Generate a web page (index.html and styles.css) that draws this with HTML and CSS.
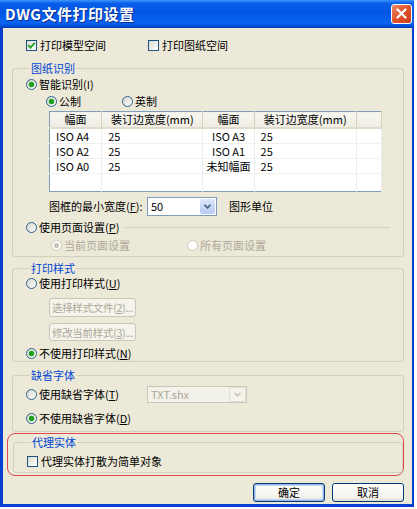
FILE: index.html
```html
<!DOCTYPE html>
<html lang="zh-CN">
<head>
    <meta charset="UTF-8">
    <title>DWG文件打印设置</title>
    <link rel="stylesheet" href="styles.css">
</head>
<body>
    <div class="window">
        <div class="titlebar">
            <span class="title">DWG文件打印设置</span>
            <span class="close-btn">
                <svg width="11" height="11" viewBox="0 0 11 11">
                    <path d="M1.5 1.5 L9.5 9.5 M9.5 1.5 L1.5 9.5" stroke="#fff" stroke-width="2.2" stroke-linecap="round"/>
                </svg>
            </span>
        </div>

        <div class="content">
            <div class="top-row">
                <label class="check first">
                    <span class="box">
                        <svg width="9" height="9" viewBox="0 0 9 9"><path d="M1.2 4.2 L3.4 6.6 L7.8 1.8" fill="none" stroke="#21a121" stroke-width="1.8"/></svg>
                    </span>打印模型空间
                </label>
                <label class="check"><span class="box"></span>打印图纸空间</label>
            </div>

            <!-- 图纸识别 -->
            <fieldset class="group g-detect">
                <legend>图纸识别</legend>
                <div class="row r-smart"><span class="radio on"></span>智能识别(I)</div>
                <div class="row r-unit">
                    <span class="opt metric"><span class="radio on"></span>公制</span>
                    <span class="opt"><span class="radio"></span>英制</span>
                </div>
                <table class="sizes">
                    <colgroup>
                        <col style="width:52px"><col style="width:101px"><col style="width:51px"><col style="width:102px"><col style="width:25px">
                    </colgroup>
                    <tr>
                        <th>幅面</th><th>装订边宽度(mm)</th><th>幅面</th><th>装订边宽度(mm)</th><th></th>
                    </tr>
                    <tr><td>ISO A4</td><td>25</td><td class="c">ISO A3</td><td>25</td><td></td></tr>
                    <tr><td>ISO A2</td><td>25</td><td class="c">ISO A1</td><td>25</td><td></td></tr>
                    <tr><td>ISO A0</td><td>25</td><td class="c">未知幅面</td><td>25</td><td></td></tr>
                    <tr class="blank"><td></td><td></td><td></td><td></td><td></td></tr>
                </table>
                <div class="row r-frame">
                    <span class="frame-label">图框的最小宽度(<u>F</u>):</span>
                    <span class="combo">
                        <span class="val">50</span>
                        <span class="arrow"><svg width="7" height="5" viewBox="0 0 7 5"><path d="M0.5 0.8 L3.5 3.8 L6.5 0.8" fill="none" stroke="#4d6185" stroke-width="1.6"/></svg></span>
                    </span>
                    <span class="unit">图形单位</span>
                </div>
                <div class="row r-page"><span class="radio"></span>使用页面设置(<u>P</u>)<span class="rule"></span></div>
                <div class="row r-sub disabled">
                    <span class="opt current"><span class="radio on"></span>当前页面设置</span>
                    <span class="opt"><span class="radio"></span>所有页面设置</span>
                </div>
            </fieldset>

            <!-- 打印样式 -->
            <fieldset class="group g-style">
                <legend>打印样式</legend>
                <div class="row r-use"><span class="radio"></span>使用打印样式(<u>U</u>)</div>
                <div class="btn small disabled">选择样式文件(<u>2</u>)...</div>
                <div class="btn small disabled second">修改当前样式(<u>3</u>)...</div>
                <div class="row r-nouse"><span class="radio on"></span>不使用打印样式(<u>N</u>)</div>
            </fieldset>

            <!-- 缺省字体 -->
            <fieldset class="group g-font">
                <legend>缺省字体</legend>
                <div class="row r-usefont">
                    <span class="font-opt"><span class="radio"></span>使用缺省字体(<u>T</u>)</span>
                    <span class="combo wide disabled">
                        <span class="val">TXT.shx</span>
                        <span class="arrow"><svg width="7" height="5" viewBox="0 0 7 5"><path d="M0.5 0.8 L3.5 3.8 L6.5 0.8" fill="none" stroke="#c9c7ba" stroke-width="1.6"/></svg></span>
                    </span>
                </div>
                <div class="row r-nofont"><span class="radio on"></span>不使用缺省字体(<u>D</u>)</div>
            </fieldset>

            <!-- 代理实体 (red marker) -->
            <div class="marker">
                <fieldset class="group g-proxy">
                    <legend>代理实体</legend>
                    <label class="check row r-proxy"><span class="box"></span>代理实体打散为简单对象</label>
                </fieldset>
            </div>

            <div class="actions">
                <div class="btn default">确定</div>
                <div class="btn">取消</div>
            </div>
        </div>
    </div>
</body>
</html>
```

FILE: styles.css
```css
body {
    margin: 0;
    background-color: #ffffff;
    font-family: "Noto Sans CJK SC", "Liberation Sans", sans-serif;
    font-size: 11px;
    line-height: 13px;
    color: #000000;
}

.window {
    width: 414px;
    box-sizing: border-box;
    border-left: 3px solid #0a3fd4;
    border-right: 2px solid #0a3fd4;
    border-bottom: 3px solid #0a3fd4;
    background-color: #ece9d8;
}

.titlebar {
    height: 27px;
    margin: 0 -2px 0 -3px;
    display: flex;
    align-items: center;
    justify-content: space-between;
    padding: 0 2px 0 5px;
    background: linear-gradient(to bottom, #3d95ff 0%, #0a5fe8 12%, #0055e5 45%, #0a64f0 85%, #0049d4 100%);
    border-bottom: 1px solid #0a3fb8;
}

.title {
    color: #ffffff;
    font-size: 15px;
    line-height: 18px;
    font-weight: bold;
    letter-spacing: 0.5px;
    text-shadow: 1px 1px 0 #0b2a8a;
}

.close-btn {
    width: 21px;
    height: 20px;
    box-sizing: border-box;
    border: 1px solid #ffffff;
    border-radius: 3px;
    background: linear-gradient(135deg, #f08a66 0%, #e0522a 50%, #c8401c 100%);
    display: flex;
    align-items: center;
    justify-content: center;
}

.content {
    padding: 10px 8px 2px 0;
}

/* checkboxes and radios */
.check {
    display: inline-flex;
    align-items: center;
}

.box {
    width: 11px;
    height: 11px;
    box-sizing: border-box;
    border: 1px solid #1c5180;
    background: linear-gradient(135deg, #dcdcd3, #ffffff);
    margin-right: 3px;
    display: inline-flex;
    align-items: center;
    justify-content: center;
}

.radio {
    width: 11px;
    height: 11px;
    box-sizing: border-box;
    border: 1px solid #2c628b;
    border-radius: 50%;
    background: linear-gradient(135deg, #d8d7cc, #ffffff);
    margin-right: 2px;
    flex: none;
}

.radio.on {
    background: radial-gradient(circle, #21a121 0 2.3px, #7fcf7f 2.8px, transparent 3.2px), linear-gradient(135deg, #d8d7cc, #ffffff);
}

.disabled .radio {
    border-color: #c9c7ba;
    background: #ffffff;
}

.disabled .radio.on {
    background: radial-gradient(circle, #cac8bb 0 2.3px, transparent 3px), #ffffff;
}

.top-row {
    height: 14px;
    display: flex;
    align-items: center;
    padding-left: 23px;
    margin-bottom: 10px;
}

.top-row .first {
    width: 122px;
}

/* group boxes */
.group {
    margin: 0 0 0 9px;
    padding: 0 0 0 13px;
    border: 1px solid #d0d0bf;
    border-radius: 3px;
}

.group legend {
    padding: 0 1px;
    margin-left: 4px;
    color: #0046d5;
    line-height: 12px;
}

.row {
    display: flex;
    align-items: center;
}

.r-smart {
    height: 20px;
}

.r-unit {
    height: 14px;
    padding-left: 20px;
}

.opt {
    display: inline-flex;
    align-items: center;
}

.metric {
    width: 76px;
}

/* size table */
.sizes {
    margin: 3px 0 0 23px;
    width: 333px;
    table-layout: fixed;
    border-collapse: collapse;
    border: 1px solid #7f9db9;
    background-color: #ffffff;
}

.sizes th {
    height: 15px;
    padding: 0;
    font-weight: normal;
    background: linear-gradient(to bottom, #f7f6f0, #efede3);
    border-bottom: 2px solid #e0dccb;
    border-right: 1px solid #d3cfbd;
}

.sizes td {
    height: 14px;
    padding: 0 0 0 6px;
    border-bottom: 1px solid #f0f0f0;
    border-right: 1px solid #ececec;
    white-space: nowrap;
    overflow: hidden;
}

.sizes td.c {
    text-align: center;
    padding: 0;
}

.sizes .blank td {
    height: 17px;
    border-bottom: none;
}

.r-frame {
    height: 19px;
    margin-top: 5px;
    padding-left: 23px;
}

.frame-label {
    width: 98px;
}

.combo {
    width: 70px;
    height: 19px;
    box-sizing: border-box;
    border: 1px solid #7f9db9;
    background-color: #ffffff;
    display: flex;
}

.combo .val {
    flex: 1;
    padding-left: 3px;
    line-height: 17px;
}

.combo .arrow {
    width: 15px;
    margin: 1px;
    border-radius: 2px;
    background: linear-gradient(to bottom, #dce6fb, #b8cbf5);
    display: flex;
    align-items: center;
    justify-content: center;
}

.unit {
    margin-left: 12px;
}

.r-page {
    height: 18px;
    margin-top: 2px;
}

.rule {
    flex: 1;
    height: 0;
    border-top: 1px solid #d0d0bf;
    margin: 0 13px 0 6px;
}

.r-sub {
    height: 18px;
    padding-left: 25px;
    color: #aca899;
    margin-bottom: 2px;
}

.current {
    width: 136px;
}

/* buttons */
.btn {
    height: 19px;
    box-sizing: border-box;
    border: 1px solid #003c74;
    border-radius: 3px;
    background: linear-gradient(to bottom, #ffffff, #f3f2ec 80%, #dcd8cc);
    display: flex;
    align-items: center;
    justify-content: center;
    white-space: nowrap;
}

.btn.small {
    width: 87px;
    margin: 6px 0 0 23px;
    font-size: 10.5px;
    letter-spacing: -0.3px;
}

.btn.small.second {
    height: 18px;
}

.btn.disabled {
    border-color: #c9c7ba;
    background: #f5f4ea;
    color: #aca899;
}

.g-style {
    margin-top: 5px;
}

.r-use {
    height: 18px;
}

.r-nouse {
    height: 16px;
    margin-top: 4px;
}

.g-font {
    margin-top: 7px;
}

.r-usefont {
    height: 26px;
}

.font-opt {
    display: inline-flex;
    align-items: center;
    width: 121px;
}

.combo.wide {
    width: 100px;
    height: 17px;
}

.combo.disabled {
    border-color: #c9c7ba;
    background-color: #f3f2ea;
    color: #aca899;
}

.combo.disabled .val {
    line-height: 15px;
}

.combo.disabled .arrow {
    background: #f5f4ea;
    border: 1px solid #e0dfd6;
    margin: 0;
}

.r-nofont {
    height: 22px;
    margin-bottom: 2px;
}

/* red annotation round the proxy group */
.marker {
    margin: 1px 0 0 4px;
    padding: 2px 0 2px 5px;
    border: 1px solid #e0484c;
    border-radius: 8px;
}

.g-proxy {
    margin: 0;
}

.r-proxy {
    display: flex;
    height: 24px;
    padding-top: 2px;
    box-sizing: border-box;
}

.actions {
    display: flex;
    justify-content: flex-end;
    gap: 7px;
    margin-top: 7px;
}

.actions .btn {
    width: 72px;
}

.btn.default {
    box-shadow: inset 0 0 0 1px #9bb5ea, inset 0 0 0 2px #c4d4f4;
}
```
